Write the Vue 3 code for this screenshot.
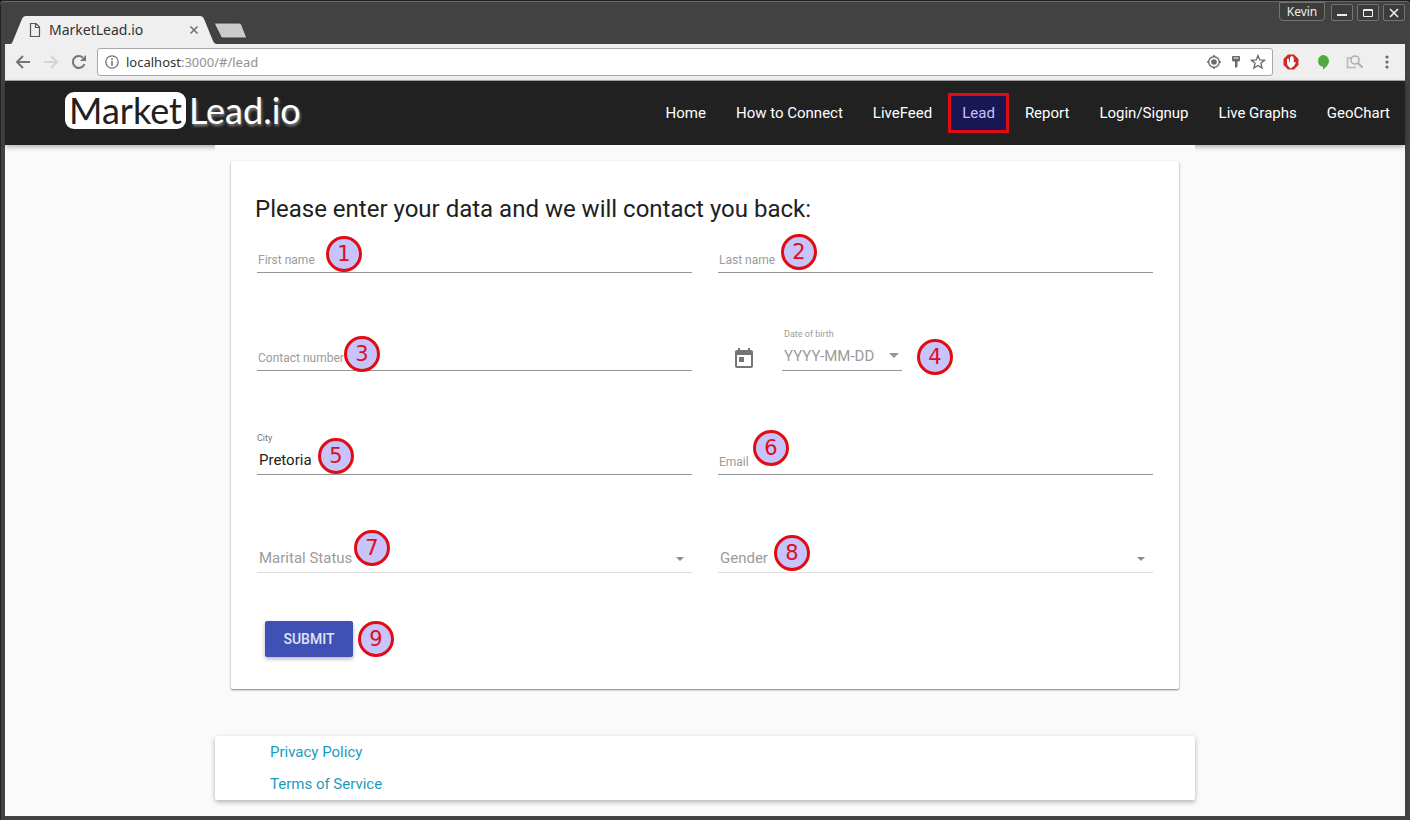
<script setup>
import { ref } from 'vue'

const navLinks = [
  { text: 'Home' },
  { text: 'How to Connect' },
  { text: 'LiveFeed' },
  { text: 'Lead', active: true },
  { text: 'Report' },
  { text: 'Login/Signup' },
  { text: 'Live Graphs' },
  { text: 'GeoChart' },
]

const fields = [
  { id: 'first', kind: 'text', label: 'First name', mark: { n: 1, x: 69, y: 1 } },
  { id: 'last', kind: 'text', label: 'Last name', mark: { n: 2, x: 63, y: 3 } },
  { id: 'contact', kind: 'text', label: 'Contact number', mark: { n: 3, x: 87, y: -1 } },
  { id: 'dob', kind: 'date', label: 'Date of birth', mark: { n: 4, x: 199, y: -4 } },
  { id: 'city', kind: 'filled', label: 'City', tall: true, mark: { n: 5, x: 61, y: 1 } },
  { id: 'email', kind: 'text', label: 'Email', tall: true, mark: { n: 6, x: 35, y: 9 } },
  { id: 'marital', kind: 'select', label: 'Marital Status', options: ['Single', 'Married'], mark: { n: 7, x: 97, y: 7 } },
  { id: 'gender', kind: 'select', label: 'Gender', options: ['Female', 'Male'], mark: { n: 8, x: 56, y: 2 } },
]

const values = ref({ first: '', last: '', contact: '', dob: '', city: 'Pretoria', email: '', marital: '', gender: '' })

const markPlace = (m) => ({ left: m.x + 'px', bottom: m.y + 'px' })
</script>

<template>
  <div class="window">
    <div class="titlebar">
      <div class="tab">
        <svg class="tab-shape" viewBox="0 0 208 28" preserveAspectRatio="none" aria-hidden="true">
          <path d="M0 28C1.500 28 2 27 2.500 26L12 3C13 1 14 0 16 0H191C193 0 194 1 195 3L204 25C205 27 206 28 208 28Z" fill="#efefef" />
        </svg>
        <svg class="page-icon" viewBox="0 0 12 14" aria-hidden="true">
          <path d="M1.500 .5H7L10.500 4V13.500H1.500Z M6.500 .5V4.500H10.500" fill="none" stroke="#555" stroke-width="1.200" />
        </svg>
        <span class="tab-title">MarketLead.io</span>
        <button class="plain tab-close" aria-label="Close tab">
          <svg width="10" height="10" viewBox="0 0 10 10"><path d="M1.500 1.500L8.500 8.500M8.500 1.500L1.500 8.500" stroke="#6e6e6e" stroke-width="1.500" /></svg>
        </button>
      </div>
      <button class="plain new-tab" aria-label="New tab">
        <svg width="34" height="17" viewBox="0 0 34 17"><path d="M2 1H24C26 1 27 1.500 28 3.500L32.500 15C33 16 32.500 16 31 16H9C7.500 16 7 15.500 6.500 14L1 3C.5 1.500 .5 1 2 1Z" fill="#cbcbcb" stroke="#383838" /></svg>
      </button>
      <div class="window-buttons">
        <button class="win user">Kevin</button>
        <button class="win" aria-label="Minimize"><svg width="12" height="10" viewBox="0 0 12 10"><path d="M1 7H11" stroke="#eee" stroke-width="2" /></svg></button>
        <button class="win" aria-label="Maximize"><svg width="12" height="10" viewBox="0 0 12 10"><path d="M1.500 1.500H10.500V8.500H1.500ZM1.500 2.500H10.500" fill="none" stroke="#eee" /></svg></button>
        <button class="win" aria-label="Close"><svg width="12" height="10" viewBox="0 0 12 10"><path d="M2 1L10 9M10 1L2 9" stroke="#eee" stroke-width="1.600" /></svg></button>
      </div>
    </div>

    <div class="toolbar">
      <button class="plain tool" aria-label="Back"><svg width="16" height="16" viewBox="0 0 16 16"><path d="M8 2L2 8L8 14M2 8H15" fill="none" stroke="#747474" stroke-width="2" /></svg></button>
      <button class="plain tool" aria-label="Forward"><svg width="16" height="16" viewBox="0 0 16 16"><path d="M8 2L14 8L8 14M14 8H1" fill="none" stroke="#d4d4d4" stroke-width="2" /></svg></button>
      <button class="plain tool" aria-label="Reload"><svg width="16" height="16" viewBox="0 0 16 16"><path d="M13.500 10A6 6 0 1 1 12 3.600" fill="none" stroke="#747474" stroke-width="2" /><path d="M15 1V7H9Z" fill="#747474" /></svg></button>
      <div class="omnibox">
        <svg width="14" height="14" viewBox="0 0 14 14" aria-hidden="true"><circle cx="7" cy="7" r="6.200" fill="none" stroke="#747474" stroke-width="1.300" /><path d="M7 6V10.800M7 3.200V5" stroke="#747474" stroke-width="1.600" /></svg>
        <a class="address" href="#/lead">localhost<span class="dim">:3000/#/lead</span></a>
        <svg width="16" height="16" viewBox="0 0 16 16" aria-hidden="true"><circle cx="8" cy="8" r="5.300" fill="none" stroke="#6a6a6a" stroke-width="1.400" /><circle cx="8" cy="8" r="2.800" fill="#6a6a6a" /><path d="M8 1V3M8 13V15M1 8H3M13 8H15" stroke="#6a6a6a" stroke-width="1.500" /></svg>
        <svg width="16" height="14" viewBox="-3 0 16 14" aria-hidden="true"><path d="M1 1.500Q1 1 2 1H8Q9 1 9 1.500V5Q9 6.500 7 6.500H6.500V11.500L5 13L4 12V6.500H3Q1 6.500 1 5Z" fill="#6a6a6a" /><path d="M2.500 3H7.500" stroke="#fff" /></svg>
        <svg width="16" height="16" viewBox="0 0 16 16" aria-hidden="true"><path d="M8 1.500L9.800 6L14.500 6.300L10.900 9.300L12.100 14L8 11.400L3.900 14L5.100 9.300L1.500 6.300L6.200 6Z" fill="none" stroke="#6a6a6a" stroke-width="1.300" /></svg>
      </div>
      <div class="extensions">
        <button class="plain" aria-label="Ad blocker"><svg width="16" height="16" viewBox="0 0 16 16"><path d="M5 .5H11L15.500 5V11L11 15.500H5L.5 11V5Z" fill="#cf2a26" /><path d="M4 5V10L5 12L7.500 14.500L11 12L13 8.500L12 8L10.800 9V3.500H10V8V2.500H9V8V2H8V8V3H7V9L5.500 4.500Z" fill="#fff" /></svg></button>
        <button class="plain" aria-label="Chat"><svg width="14" height="16" viewBox="0 0 14 16"><path d="M7 1A6 6 0 0 1 13 7C13 10 10 13.500 7 15.500V12.800A6 6 0 0 1 7 1Z" fill="#51a83e" /></svg></button>
        <button class="plain" aria-label="Page search"><svg width="18" height="16" viewBox="0 0 18 16"><path d="M5 4H1.500V13.500H10" fill="none" stroke="#b8b8b8" stroke-width="1.600" /><circle cx="9" cy="6" r="4" fill="none" stroke="#b0b0b0" stroke-width="1.600" /><path d="M11.800 9L16.500 13.500" stroke="#b0b0b0" stroke-width="2" /></svg></button>
        <button class="plain" aria-label="Menu"><svg width="6" height="16" viewBox="0 0 6 16"><g fill="#6a6a6a"><circle cx="3" cy="3" r="1.600" /><circle cx="3" cy="8" r="1.600" /><circle cx="3" cy="13" r="1.600" /></g></svg></button>
      </div>
    </div>

    <div class="page">
      <header class="site-header">
        <a class="logo" href="#/"><span class="logo-market">Market</span><span class="logo-lead">Lead.io</span></a>
        <nav>
          <a v-for="link in navLinks" :key="link.text" href="#/lead" :class="{ active: link.active }">{{ link.text }}</a>
        </nav>
      </header>

      <main class="content">
        <section class="card">
          <h1>Please enter your data and we will contact you back:</h1>
          <form @submit.prevent>
            <div class="fields">
              <div v-for="f in fields" :key="f.id" class="field" :class="[f.kind, { tall: f.tall }]">
                <template v-if="f.kind === 'text'">
                  <input :id="f.id" v-model="values[f.id]" type="text" :placeholder="f.label" :aria-label="f.label" />
                </template>
                <template v-else-if="f.kind === 'filled'">
                  <label :for="f.id">{{ f.label }}</label>
                  <input :id="f.id" v-model="values[f.id]" type="text" />
                </template>
                <template v-else-if="f.kind === 'date'">
                  <button type="button" class="plain calendar" aria-label="Open calendar">
                    <svg width="24" height="24" viewBox="0 0 24 24"><path d="M19 3h-1V1h-2v2H8V1H6v2H5c-1.100 0-2 .9-2 2v14c0 1.100.9 2 2 2h14c1.100 0 2-.9 2-2V5c0-1.100-.9-2-2-2zm0 16H5V8h14v11zM7 10h5v5H7z" fill="#757575" /></svg>
                  </button>
                  <div class="date-box">
                    <label :for="f.id">{{ f.label }}</label>
                    <div class="control">
                      <input :id="f.id" v-model="values[f.id]" type="text" placeholder="YYYY-MM-DD" />
                      <svg class="arrow" width="10" height="5" viewBox="0 0 10 5" aria-hidden="true"><path d="M0 0H10L5 5Z" fill="#969696" /></svg>
                    </div>
                  </div>
                </template>
                <div v-else class="control">
                  <select :id="f.id" v-model="values[f.id]" :aria-label="f.label">
                    <option value="" disabled>{{ f.label }}</option>
                    <option v-for="o in f.options" :key="o">{{ o }}</option>
                  </select>
                  <svg class="arrow" width="8" height="4" viewBox="0 0 8 4" aria-hidden="true"><path d="M0 0H8L4 4Z" fill="#8c8c8c" /></svg>
                </div>
                <span class="mark" :style="markPlace(f.mark)">{{ f.mark.n }}</span>
              </div>
            </div>
            <div class="actions">
              <button class="submit" type="submit">SUBMIT</button>
              <span class="mark inline">9</span>
            </div>
          </form>
        </section>

        <footer class="site-footer">
          <a href="#/privacy">Privacy Policy</a>
          <a href="#/terms">Terms of Service</a>
        </footer>
      </main>
    </div>
  </div>
</template>

<style>
html {
  background: #000;
}
</style>

<style scoped>
.window,
.window * {
  box-sizing: border-box;
}
.window {
  display: flex;
  flex-direction: column;
  min-height: 100vh;
  padding: 0 5px 4px;
  background: #424242;
  border-radius: 4px 4px 0 0;
  box-shadow: inset 0 1px #222, inset 0 2px #686868, inset 1px 0 #222;
  font-family: Roboto, sans-serif;
}
.plain {
  display: flex;
  align-items: center;
  justify-content: center;
  padding: 0;
  border: 0;
  background: none;
}
svg {
  display: block;
  flex: none;
}

/* Browser frame */
.titlebar {
  display: flex;
  align-items: flex-end;
  height: 44px;
  padding-left: 5px;
}
.tab {
  position: relative;
  display: flex;
  align-items: center;
  width: 207px;
  height: 28px;
  padding: 0 18px 0 19px;
}
.tab-shape {
  position: absolute;
  inset: 0;
  width: 100%;
  height: 100%;
}
.page-icon {
  position: relative;
  width: 12px;
  height: 14px;
}
.tab-title {
  position: relative;
  flex: 1;
  margin-left: 8px;
  font: 14px/20px 'Noto Sans', sans-serif;
  color: #333;
}
.tab-close {
  position: relative;
}
.new-tab {
  margin: 0 0 5px -3px;
}
.window-buttons {
  display: flex;
  align-items: flex-start;
  align-self: flex-start;
  gap: 4px;
  margin-left: auto;
  padding-top: 4px;
}
.win {
  display: flex;
  align-items: center;
  justify-content: center;
  width: 22px;
  height: 17px;
  padding: 0;
  border: 1px solid #747474;
  border-radius: 2px;
  background: #3c3c3c;
  color: #eee;
}
.win.user {
  width: 46px;
  height: 19px;
  margin: -2px 2px 0 0;
  border-radius: 0 0 4px 4px;
  font: 12px/16px 'Noto Sans', sans-serif;
}
.toolbar {
  display: flex;
  align-items: center;
  height: 37px;
  padding: 0 2px 0 10px;
  background: #efefef;
  border-bottom: 1px solid #a5aaa8;
}
.tool {
  width: 16px;
  margin-right: 12px;
}
.omnibox {
  display: flex;
  flex: 1;
  align-items: center;
  gap: 6px;
  height: 28px;
  margin-left: -2px;
  padding: 0 6px 0 7px;
  background: #fff;
  border: 1px solid #a8a8a8;
  border-radius: 3px;
}
.address {
  flex: 1;
  padding-left: 1px;
  font: 13px/20px 'Noto Sans', sans-serif;
  color: #333;
  text-decoration: none;
}
.address .dim {
  color: #929292;
}
.extensions {
  display: flex;
  padding-left: 2px;
}
.extensions button {
  width: 32px;
}

/* Site */
.page {
  flex: 1;
  background: #fafafa;
}
.site-header {
  display: flex;
  align-items: center;
  justify-content: space-between;
  height: 64px;
  padding-left: 60px;
  background: #212121;
  box-shadow: 0 2px 5px rgba(0, 0, 0, 0.3);
}
.logo {
  display: flex;
  gap: 3px;
  padding-bottom: 5px;
  font: 36px/36px Lato, sans-serif;
  text-decoration: none;
}
.logo-market {
  height: 37px;
  padding: 0 4px;
  border-radius: 9px;
  background: #fff;
  color: #212121;
}
.logo-lead {
  color: #fff;
  text-shadow: 1px 2px 3px #888;
}
nav {
  display: flex;
  align-items: center;
}
nav a {
  padding: 0 15px;
  font-size: 15px;
  line-height: 34px;
  color: #fff;
  text-decoration: none;
}
nav a.active {
  margin: 0 1px;
  padding: 0 11px;
  border: 3px solid #e00c12;
  background: #191753;
  color: #c5c0ff;
}
.content {
  position: relative;
  max-width: 980px;
  margin: 0 auto;
  padding-top: 16px;
  background: #fafafa;
}
.card {
  margin: 0 16px;
  padding: 32px 26px;
  background: #fff;
  border-radius: 2px;
  box-shadow: 0 1px 2px rgba(0, 0, 0, 0.5);
}
h1 {
  margin: 0 -2px;
  font-size: 24px;
  font-weight: 400;
  line-height: 32px;
  color: #212121;
}
.fields {
  display: grid;
  grid-template-columns: 1fr 1fr;
  gap: 50px 26px;
}
.field {
  position: relative;
  display: flex;
  flex-direction: column;
  justify-content: flex-end;
  min-height: 48px;
}
.field.tall {
  min-height: 54px;
}
.field label {
  font-size: 9px;
  line-height: 14px;
  color: #757575;
}
input,
select {
  width: 100%;
  height: 30px;
  padding: 0 2px;
  border: 0;
  border-bottom: 1px solid #949494;
  border-radius: 0;
  outline: 0;
  background: none;
  font: 15px Roboto, sans-serif;
  color: #212121;
}
.text input {
  padding: 4px 1px 0;
  font-size: 12px;
}
input::placeholder {
  color: #9b9b9b;
  opacity: 1;
}
.control {
  position: relative;
}
select {
  appearance: none;
  border-color: #dedede;
  color: #9b9b9b;
}
.arrow {
  position: absolute;
  top: 14px;
  right: 8px;
}
.date {
  flex-direction: row;
  align-items: flex-end;
  justify-content: flex-start;
}
.calendar {
  margin: 0 26px 0 14px;
}
.date-box {
  display: flex;
  flex-direction: column;
  width: 120px;
}
.date-box label {
  padding-left: 2px;
  color: #9b9b9b;
}
.date-box .arrow {
  top: 12px;
  right: 3px;
}
.mark {
  position: absolute;
  width: 36px;
  height: 36px;
  border: 3px solid #e00c12;
  border-radius: 50%;
  background: #c7c3fb;
  font: 21px/30px 'DejaVu Sans', sans-serif;
  text-align: center;
  color: #dc0f1c;
}
.mark.inline {
  position: static;
}
.actions {
  display: flex;
  gap: 5px;
  margin: 48px 0 0 8px;
}
.submit {
  width: 88px;
  height: 36px;
  border: 0;
  border-radius: 2px;
  background: #3f51b5;
  box-shadow: 0 2px 4px rgba(0, 0, 0, 0.3);
  font: 500 14px Roboto, sans-serif;
  color: #e2e4f4;
}
.site-footer {
  display: flex;
  flex-direction: column;
  align-items: flex-start;
  margin-top: 47px;
  padding-left: 55px;
  background: #fff;
  border-radius: 2px;
  box-shadow: 0 2px 5px rgba(0, 0, 0, 0.3);
}
.site-footer a {
  font-size: 15px;
  line-height: 32px;
  color: #1a9bbf;
  text-decoration: none;
}
</style>
